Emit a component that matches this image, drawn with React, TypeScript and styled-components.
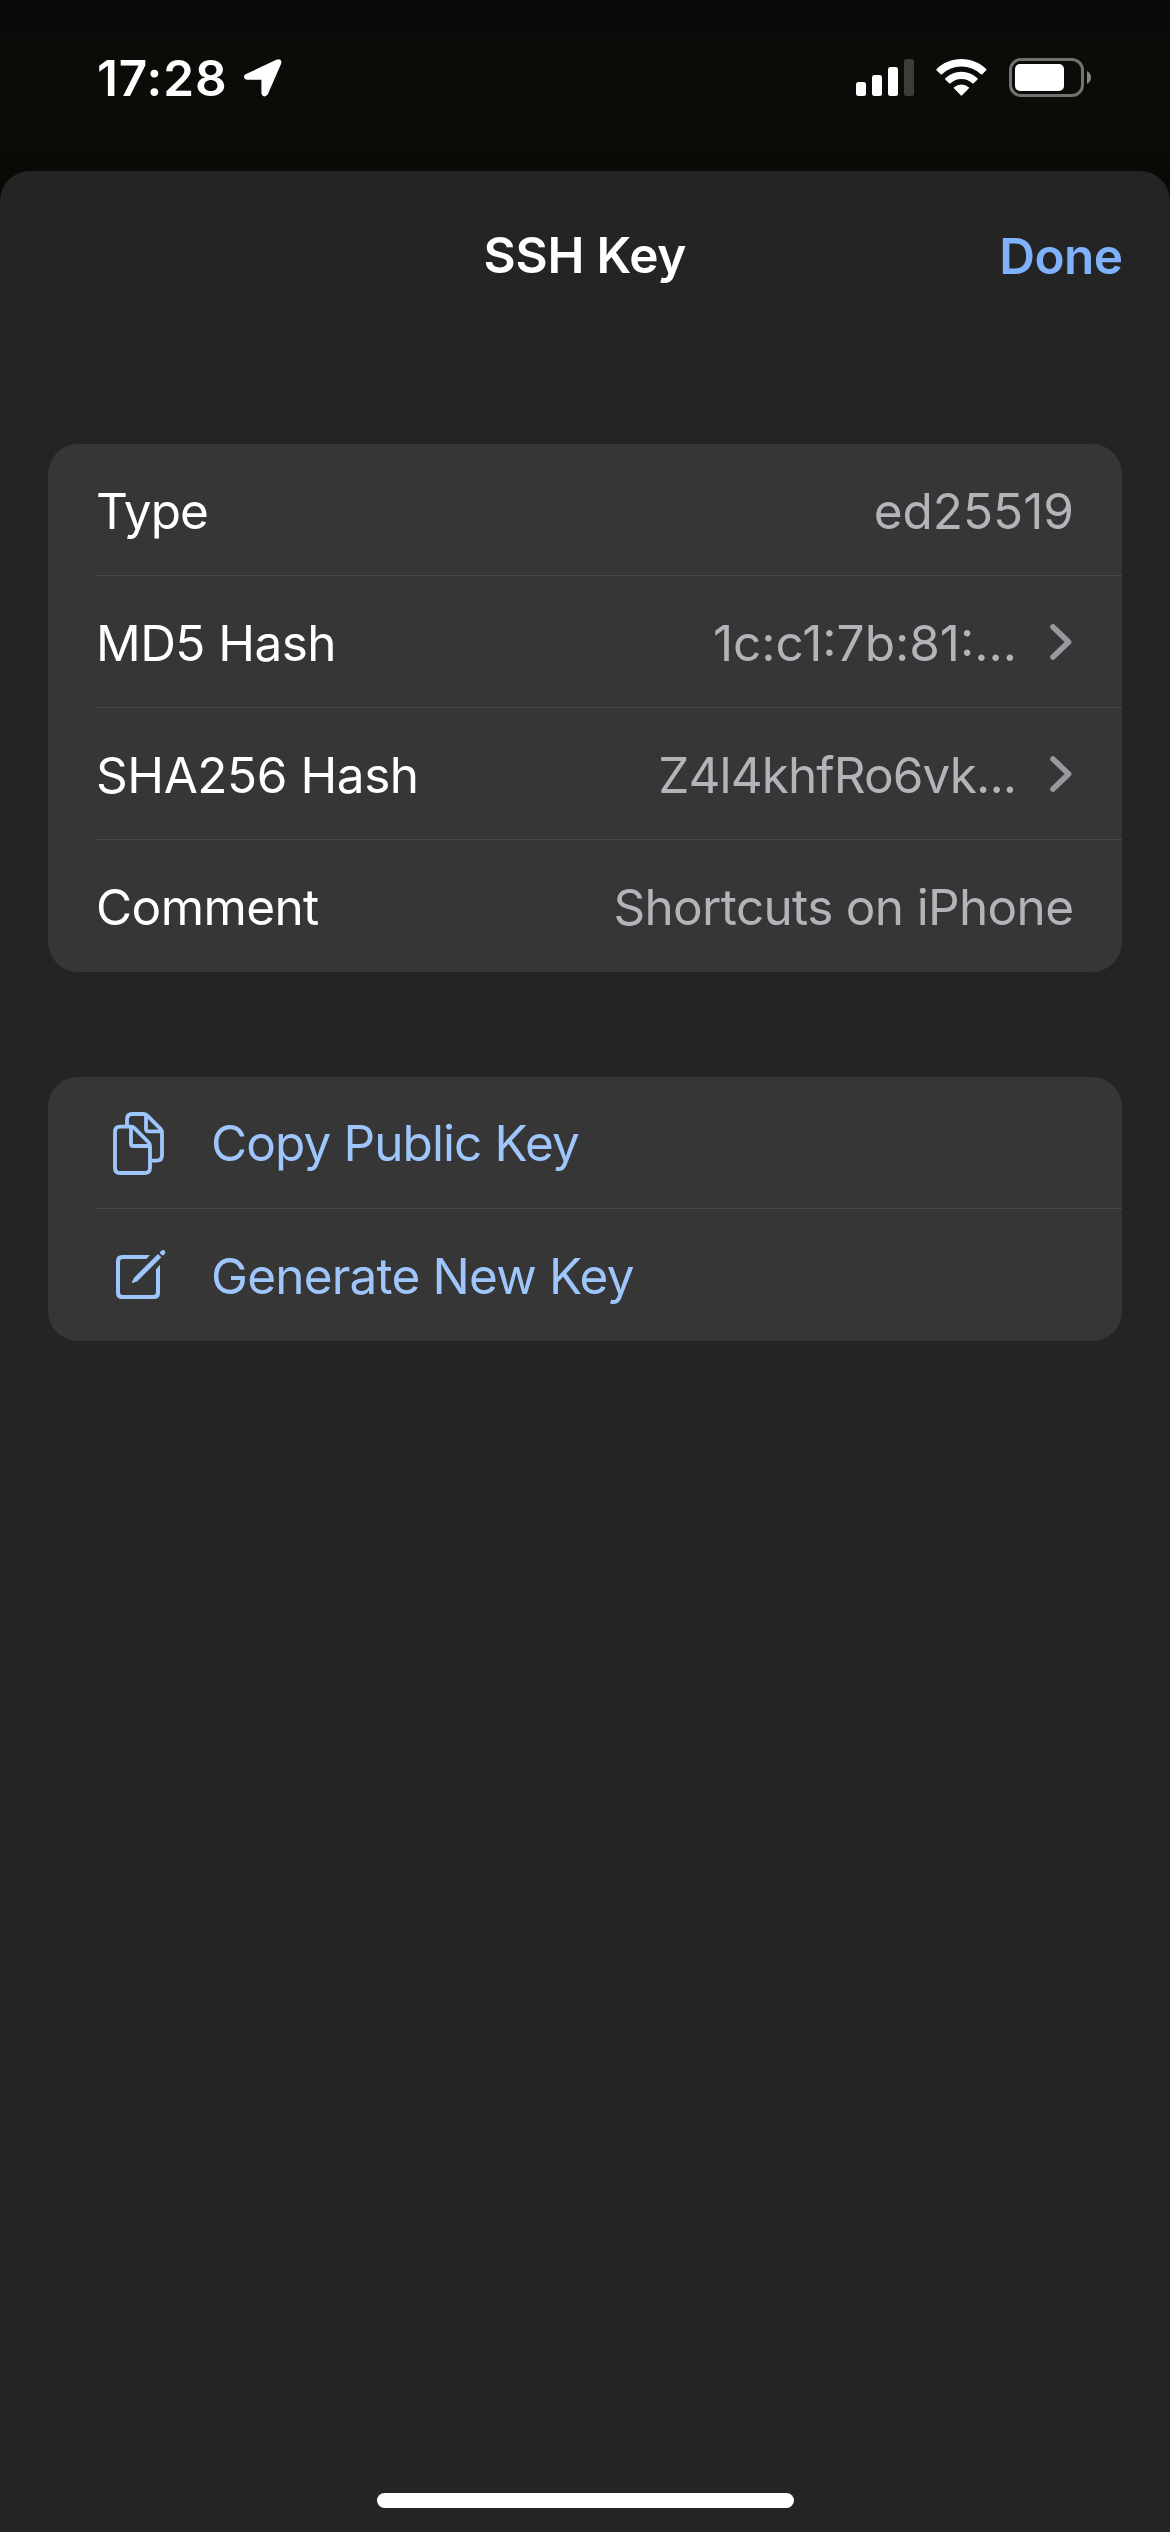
import React from "react";
import styled, { createGlobalStyle } from "styled-components";

const GlobalStyle = createGlobalStyle`
  *, *::before, *::after { box-sizing: border-box; }
  html, body { margin: 0; padding: 0; background: #0a0c08; }
  body { font-family: Inter, "Liberation Sans", sans-serif; }
`;

const Screen = styled.div`
  width: 1170px;
  height: 2532px;
  overflow: hidden;
  display: flex;
  flex-direction: column;
  background: linear-gradient(#0a0a09 0, #0a0c08 60px, #0a0c08 140px, #080a05 171px);
`;

const StatusBar = styled.header`
  height: 171px;
  flex: none;
  display: flex;
  justify-content: space-between;
  padding: 58px 78px 0 97px;
`;

const StatusGroup = styled.div<{ $gap: number }>`
  height: 40px;
  display: flex;
  align-items: center;
  gap: ${(p) => p.$gap}px;
`;

const Label = styled.span<{
  $weight?: number;
  $color?: string;
  $track?: number;
  $drop?: number;
}>`
  padding-top: ${(p) => p.$drop ?? 0}px;
  font-size: 49.5px;
  font-weight: ${(p) => p.$weight ?? 400};
  color: ${(p) => p.$color ?? "#ffffff"};
  letter-spacing: ${(p) => p.$track ?? 0}px;
  margin-right: ${(p) => -(p.$track ?? 0)}px;
  line-height: 60px;
  white-space: nowrap;
`;

const Icon = styled.svg`
  display: block;
  flex: none;
  overflow: visible;
`;

const Sheet = styled.main`
  flex: 1;
  display: flex;
  flex-direction: column;
  padding: 0 48px 24px;
  background: #242424;
  border-radius: 30px 30px 0 0;
`;

const NavBar = styled.nav`
  height: 168px;
  flex: none;
  display: grid;
  grid-template-columns: 1fr auto 1fr;
  align-items: center;
`;

const NavTitle = styled.h1`
  grid-column: 2;
  margin: 0;
  line-height: 60px;
  display: flex;
`;

const DoneButton = styled.button`
  justify-self: end;
  margin: 2px -1px 0 0;
  padding: 0;
  border: 0;
  background: none;
  font-family: inherit;
  display: flex;
`;

const Card = styled.section`
  flex: none;
  margin-top: 105px;
  background: #363636;
  border-radius: 30px;
  overflow: hidden;
`;

const Row = styled.div`
  height: 132px;
  margin-left: 48px;
  padding-right: 50px;
  display: flex;
  align-items: center;

  &:not(:last-child) { box-shadow: inset 0 -1px #484849; }
`;

const Value = styled.div<{ $flush: boolean }>`
  margin-left: auto;
  margin-right: ${(p) => (p.$flush ? -2 : 0)}px;
  display: flex;
  align-items: center;
  gap: 33px;
`;

const ActionIcon = styled.div`
  width: 115px;
  padding-left: 14px;
`;

const HomeIndicator = styled.div`
  width: 417px;
  height: 15px;
  margin: auto auto 0;
  border-radius: 8px;
  background: #ffffff;
`;

const GREY = "#b3b3ba";
const BLUE = "#9fc6fc";

const LocationIcon = () => (
  <Icon width="40" height="40" viewBox="0 0 40 40">
    <path
      d="M3 17.2 33.8 2.7Q38 1 37.3 5.2L23.8 36Q22.6 37.7 20.8 37.3 19.5 37 19.4 35V21.7Q19.4 20.8 18.4 20.8H4.6Q2 20.6 2 18.8 2 17.8 3 17.2Z"
      fill="#fff"
      stroke="#fff"
      strokeWidth="2"
      strokeLinejoin="round"
    />
  </Icon>
);

const SignalIcon = () => (
  <Icon width="58" height="40" viewBox="0 0 58 40">
    <rect x="0" y="24" width="10" height="14" rx="2.5" fill="#fff" />
    <rect x="16" y="17" width="10" height="21" rx="2.5" fill="#fff" />
    <rect x="32" y="9" width="10" height="29" rx="2.5" fill="#fff" />
    <rect x="48" y="1" width="10" height="37" rx="2.5" fill="#3b3d39" />
  </Icon>
);

const WifiIcon = () => (
  <Icon width="51" height="40" viewBox="0 0 51 40" fill="#fff">
    <path d="M25.4 1C35 1 43.8 4.8 50.2 11Q50.8 11.7 50.2 12.3L46.3 16.2Q45.6 16.8 44.9 16.2A28.3 28.3 0 0 0 5.9 16.2Q5.2 16.8 4.5 16.2L.6 12.3Q0 11.7.6 11C7 4.8 15.8 1 25.4 1Z" />
    <path d="M25.4 13.7A23 23 0 0 1 41.5 20.2Q42.2 20.9 41.5 21.5L37.7 25.3Q37 25.9 36.3 25.3A16 16 0 0 0 14.5 25.3Q13.8 25.9 13.1 25.3L9.3 21.5Q8.6 20.9 9.3 20.2A23 23 0 0 1 25.4 13.7Z" />
    <path d="M25.4 26.5Q29.4 26.5 32.7 29.2 33.4 29.8 32.7 30.5L26.1 37.3Q25.4 38 24.7 37.3L18.1 30.5Q17.4 29.8 18.1 29.2 21.4 26.5 25.4 26.5Z" />
  </Icon>
);

const BatteryIcon = () => (
  <Icon width="83" height="40" viewBox="0 0 83 40">
    <rect x="1.5" y="1.5" width="72" height="36" rx="10.5" fill="none" stroke="#71726f" strokeWidth="3" />
    <rect x="6" y="6" width="49" height="27" rx="5" fill="#fff" />
    <path d="M78 13Q82 15.2 82 19.5T78 26Z" fill="#858583" />
  </Icon>
);

const ChevronIcon = () => (
  <Icon width="22" height="36" viewBox="0 0 22 36">
    <path d="M3 3 18.6 18 3 33" fill="none" stroke="#98989f" strokeWidth="5.6" strokeLinecap="round" strokeLinejoin="round" />
  </Icon>
);

const CopyIcon = () => (
  <Icon width="60" height="66" viewBox="60 150 180 198" fill="none" stroke={BLUE} strokeWidth="11.5" strokeLinejoin="round">
    <path d="M90 200H124Q130 200 134 205L175 246Q180 251 180 258V323Q180 339 164 339H90Q75 339 75 323V216Q75 200 90 200Z" />
    <path d="M123 203V251Q123 258 130 258H178" />
    <path d="M111 198V178Q111 162 127 162H160Q167 162 172 167L211 206Q216 211 216 218V286Q216 302 200 302H184" />
    <path d="M168 165V207Q168 214 175 214H214" />
  </Icon>
);

const ComposeIcon = () => (
  <Icon width="60" height="54" viewBox="60 564 180 162" fill={BLUE}>
    <path d="M180 585 169 597H99Q90 597 90 606V696Q90 705 99 705H189Q198 705 198 696V628L210 614V698Q210 717 191 717H97Q78 717 78 698V604Q78 585 97 585Z" />
    <path d="M204 582 214 592 142 664 128 669Q125 669 126 666L132 653Z" />
    <path d="M214 572Q218 568 223 571 228 576 225 581L220 586Q217 587 214 584L210 580Q209 577 211 575Z" />
  </Icon>
);

const details = [
  { name: "Type", track: -1, value: "ed25519", valueTrack: 0, link: false },
  { name: "MD5 Hash", track: -0.55, value: "1c:c1:7b:81:...", valueTrack: 0, link: true },
  { name: "SHA256 Hash", track: -0.45, value: "Z4l4khfRo6vk...", valueTrack: -0.9, link: true },
  { name: "Comment", track: -0.6, value: "Shortcuts on iPhone", valueTrack: -0.67, link: false },
];

const actions = [
  { name: "Copy Public Key", track: -0.9, drop: 0, icon: <CopyIcon /> },
  { name: "Generate New Key", track: -0.8, drop: 2, icon: <ComposeIcon /> },
];

export default function App() {
  return (
    <Screen>
      <GlobalStyle />
      <StatusBar>
        <StatusGroup $gap={16}>
          <Label $weight={600} $track={0.9}>17:28</Label>
          <LocationIcon />
        </StatusGroup>
        <StatusGroup $gap={22}>
          <SignalIcon />
          <WifiIcon />
          <BatteryIcon />
        </StatusGroup>
      </StatusBar>
      <Sheet>
        <NavBar>
          <NavTitle>
            <Label $weight={600} $track={-0.2}>SSH Key</Label>
          </NavTitle>
          <DoneButton>
            <Label $weight={600} $color="#7fb2fb" $track={-0.6}>Done</Label>
          </DoneButton>
        </NavBar>
        <Card>
          {details.map((d) => (
            <Row key={d.name}>
              <Label $track={d.track} $drop={2}>{d.name}</Label>
              <Value $flush={!d.link}>
                <Label $color={GREY} $track={d.valueTrack} $drop={2}>{d.value}</Label>
                {d.link && <ChevronIcon />}
              </Value>
            </Row>
          ))}
        </Card>
        <Card>
          {actions.map((a) => (
            <Row key={a.name}>
              <ActionIcon>{a.icon}</ActionIcon>
              <Label $color={BLUE} $track={a.track} $drop={a.drop}>{a.name}</Label>
            </Row>
          ))}
        </Card>
        <HomeIndicator />
      </Sheet>
    </Screen>
  );
}
